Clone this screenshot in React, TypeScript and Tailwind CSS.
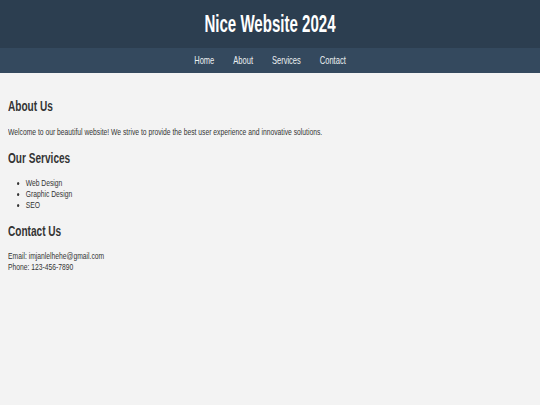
const navLinks = ["Home", "About", "Services", "Contact"];

const services = ["Web Design", "Graphic Design", "SEO"];

// the page text is set in a horizontally condensed Arial
export default function App() {
  return (
    <div className="min-h-[405px] bg-[#f3f3f3] font-['Liberation_Sans',Arial,sans-serif] text-[#333]">
      <header className="h-[48px] bg-[#2c3e50] pt-[13px] text-center">
        <h1 className="scale-x-[0.655] text-[23px] leading-[23px] font-bold text-white">
          Nice Website 2024
        </h1>
      </header>
      <nav className="flex h-[25px] items-center bg-[#34495e]">
        <div className="flex w-full scale-x-[0.685] justify-center gap-[27.7px]">
          {navLinks.map((link) => (
            <a
              key={link}
              href="#"
              className="text-[11px] leading-[11px] text-[#ecf0f1]"
            >
              {link}
            </a>
          ))}
        </div>
      </nav>
      <main className="px-2 pt-[25px]">
        <h2 className="mb-[12.5px] origin-left scale-x-[0.72] text-[14px] leading-[16px] font-bold">
          About Us
        </h2>
        <p className="mb-[12.5px] origin-left scale-x-[0.75] text-[9px] leading-[10.7px] whitespace-nowrap">
          Welcome to our beautiful website! We strive to provide the best user
          experience and innovative solutions.
        </p>
        <h2 className="mb-[12.5px] origin-left scale-x-[0.72] text-[14px] leading-[16px] font-bold">
          Our Services
        </h2>
        <ul className="mb-[12.5px] origin-left scale-x-[0.75] list-disc pl-[23.6px] text-[9px] leading-[10.7px]">
          {services.map((s) => (
            <li key={s}>{s}</li>
          ))}
        </ul>
        <h2 className="mb-[12.5px] origin-left scale-x-[0.72] text-[14px] leading-[16px] font-bold">
          Contact Us
        </h2>
        <p className="origin-left scale-x-[0.75] text-[9px] leading-[10.7px]">
          Email: imjanlelhehe@gmail.com
          <br />
          Phone: 123-456-7890
        </p>
      </main>
    </div>
  );
}
